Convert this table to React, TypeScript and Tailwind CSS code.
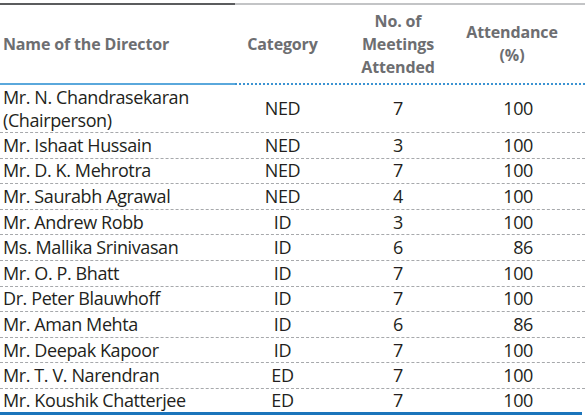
import React from 'react';

type Row = { name: string[]; cat: string; meetings: string; pct: string };

const rows: Row[] = [
  { name: ['Mr. N. Chandrasekaran', '(Chairperson)'], cat: 'NED', meetings: '7', pct: '100' },
  { name: ['Mr. Ishaat Hussain'], cat: 'NED', meetings: '3', pct: '100' },
  { name: ['Mr. D. K. Mehrotra'], cat: 'NED', meetings: '7', pct: '100' },
  { name: ['Mr. Saurabh Agrawal'], cat: 'NED', meetings: '4', pct: '100' },
  { name: ['Mr. Andrew Robb'], cat: 'ID', meetings: '3', pct: '100' },
  { name: ['Ms. Mallika Srinivasan'], cat: 'ID', meetings: '6', pct: '86' },
  { name: ['Mr. O. P. Bhatt'], cat: 'ID', meetings: '7', pct: '100' },
  { name: ['Dr. Peter Blauwhoff'], cat: 'ID', meetings: '7', pct: '100' },
  { name: ['Mr. Aman Mehta'], cat: 'ID', meetings: '6', pct: '86' },
  { name: ['Mr. Deepak Kapoor'], cat: 'ID', meetings: '7', pct: '100' },
  { name: ['Mr. T. V. Narendran'], cat: 'ED', meetings: '7', pct: '100' },
  { name: ['Mr. Koushik Chatterjee'], cat: 'ED', meetings: '7', pct: '100' },
];

const font = { fontFamily: '"Open Sans", "Noto Sans", sans-serif' };

export default function App() {
  return (
    <div className="w-[585px] h-[417px] bg-white overflow-hidden" style={font}>
      <div className="pt-[3px]">
        {/* top rule */}
        <div className="flex h-[2px]">
          <div className="w-[235px] bg-[#5b5c5e]" />
          <div className="flex-1 bg-[#c3c4c6]" />
        </div>

        {/* header */}
        <div className="flex h-[78px] items-center text-[16px] font-bold leading-[23px] tracking-[-0.15px] text-[#6d6e71]">
          <div className="w-[235px] pl-[3px]">Name of the Director</div>
          <div className="w-[95px] text-center">Category</div>
          <div className="w-[136px] text-center">
            No. of
            <br />
            Meetings
            <br />
            Attended
          </div>
          <div className="w-[92px] text-center">
            Attendance
            <br />
            (%)
          </div>
        </div>

        <div className="flex h-[2px] items-center">
          <div className="w-[235px] h-[2px] bg-[#5aa8dc]" />
          <div className="flex-1 border-t-2 border-dotted border-[#3b93d2]" />
        </div>

        {/* body */}
        <div className="text-[18px] tracking-[-0.4px] text-[#231f20]">
          {rows.map((r, i) => (
            <div
              key={i}
              className={`flex items-center ${i === 0 ? 'h-[48px]' : 'h-[25.6px]'} ${
                i === rows.length - 1 ? 'border-b-[3px] border-solid border-[#1b75bb] mr-[3px]' : 'border-b border-dashed border-[#a7a9ac]'
              }`}
            >
              <div className="w-[235px] pl-[3px] leading-[23px]">
                {r.name.map((n, j) => (
                  <div key={j}>{n}</div>
                ))}
              </div>
              <div className="w-[95px] text-center">{r.cat}</div>
              <div className="w-[136px] text-center">{r.meetings}</div>
              <div className="w-[102px] text-center">
                <span className="inline-block w-[32px] text-right">{r.pct}</span>
              </div>
            </div>
          ))}
        </div>
      </div>
    </div>
  );
}
